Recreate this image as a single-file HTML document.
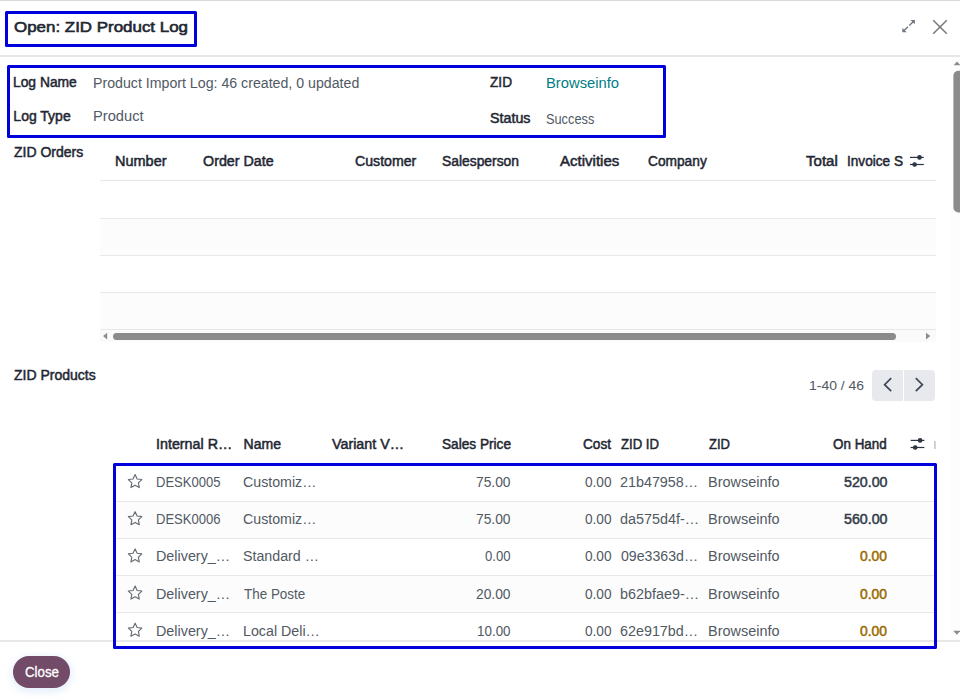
<!DOCTYPE html>
<html lang="en">
<head>
<meta charset="utf-8">
<title>Open: ZID Product Log</title>
<style>
html,body{margin:0;padding:0;background:#fff;}
body{width:960px;height:700px;position:relative;overflow:hidden;font-family:"Liberation Sans",Arial,sans-serif;}
.a{position:absolute;}
.t{position:absolute;white-space:nowrap;line-height:20px;font-weight:400;transform-origin:0 0;}
.t.b{font-weight:400;-webkit-text-stroke:0.5px currentColor;}
.t.c{-webkit-text-stroke:0.3px currentColor;}
.t.h{-webkit-text-stroke:0.6px currentColor;}
i.m{display:inline-block;width:0;height:0;}
.ln{position:absolute;height:1px;background:#e7e8ea;}
.hl{position:absolute;border:3px solid #0000dc;box-sizing:border-box;border-radius:1.5px;}
.stripe{position:absolute;left:100px;width:836px;background:#fcfcfc;}
svg{position:absolute;overflow:visible;}
</style>
</head>
<body>
<!-- dialog frame -->
<div class="a" style="left:0;top:0;width:960px;height:1px;background:#d9dadc"></div>
<div class="a" style="left:0;top:55px;width:960px;height:1.5px;background:#e6e7e9"></div>
<div class="a" style="left:0;top:640px;width:960px;height:1.6px;background:#e7e8ea"></div>

<div class="a" style="left:951px;top:57px;width:9px;height:583px;background:#fdfdfd"></div>
<!-- ZID Orders table -->
<div class="stripe" style="top:218px;height:37px"></div>
<div class="stripe" style="top:292px;height:37px"></div>
<div class="ln" style="left:100px;width:836px;top:180px;background:#e5e6e8"></div>
<div class="ln" style="left:100px;width:836px;top:218px"></div>
<div class="ln" style="left:100px;width:836px;top:255px"></div>
<div class="ln" style="left:100px;width:836px;top:292px"></div>
<div class="ln" style="left:100px;width:836px;top:329px"></div>
<!-- horizontal scrollbar -->
<div class="a" style="left:100px;top:330px;width:836px;height:12px;background:#fafafa"></div>
<div class="a" style="left:113px;top:332.5px;width:783px;height:7px;border-radius:3.5px;background:#8b8b8b"></div>
<svg style="left:0;top:0" width="960" height="700" viewBox="0 0 960 700">
  <path d="M107.2 332.8 L107.2 339.4 L103 336.1 Z" fill="#8b8b8b"/>
  <path d="M926 332.8 L926 339.4 L930.3 336.1 Z" fill="#8b8b8b"/>
  <!-- vertical scrollbar -->
  <path d="M953.6 65.3 L960.5 65.3 L957 61.6 Z" fill="#8b8b8b"/>
  <path d="M953.3 630.7 L960.5 630.7 L956.9 634.7 Z" fill="#8b8b8b"/>
  <rect x="953.4" y="70.7" width="12" height="141.8" rx="5" fill="#8b8b8b"/>
  <!-- expand icon -->
  <g fill="#6f7680" stroke="none">
    <path d="M914.9 19.9 L914.9 24.3 L910.5 19.9 Z"/>
    <path d="M902.3 32.3 L902.3 27.9 L906.7 32.3 Z"/>
  </g>
  <g stroke="#6f7680" stroke-width="1.4" fill="none">
    <path d="M913.4 21.4 L909.3 25.5"/>
    <path d="M903.8 30.8 L907.9 26.7"/>
  </g>
  <!-- close X -->
  <g stroke="#7a7a7c" stroke-width="1.55" fill="none" stroke-linecap="butt">
    <path d="M933.2 20.2 L946.8 33.8"/>
    <path d="M946.8 20.2 L933.2 33.8"/>
  </g>
  <!-- slider icons -->
  <g id="sl1" stroke="#2c3541" stroke-width="1.2" fill="#2c3541">
    <path d="M910 157.4 H923.8" fill="none"/>
    <path d="M910 164.5 H923.8" fill="none"/>
    <circle cx="919.5" cy="157.4" r="1.75"/>
    <circle cx="914.6" cy="164.5" r="1.75"/>
  </g>
  <g stroke="#2c3541" stroke-width="1.2" fill="#2c3541" transform="translate(0.6,283.0)">
    <path d="M910 157.4 H923.8" fill="none"/>
    <path d="M910 164.5 H923.8" fill="none"/>
    <circle cx="919.5" cy="157.4" r="1.75"/>
    <circle cx="914.6" cy="164.5" r="1.75"/>
  </g>
  <rect x="934.2" y="441" width="1.4" height="8" fill="#b9bcc1"/>
</svg>

<!-- pager -->
<div class="a" style="left:871.5px;top:369.5px;width:31.5px;height:31.7px;background:#e7e9ed;border-radius:4px 0 0 4px"></div>
<div class="a" style="left:904px;top:369.5px;width:31.4px;height:31.7px;background:#e7e9ed;border-radius:0 4px 4px 0"></div>
<svg style="left:0;top:0" width="960" height="700" viewBox="0 0 960 700">
  <g stroke="#3f4856" stroke-width="1.7" fill="none" stroke-linejoin="miter">
    <path d="M891.2 378.2 L884.6 384.7 L891.2 391.2"/>
    <path d="M915.8 378.2 L922.4 384.7 L915.8 391.2"/>
  </g>
</svg>

<!-- ZID Products table -->
<div class="stripe" style="top:501px;height:37px;left:116px;width:818px"></div>
<div class="stripe" style="top:575px;height:37px;left:116px;width:818px"></div>
<div class="ln" style="left:116px;width:818px;top:501px"></div>
<div class="ln" style="left:116px;width:818px;top:538px"></div>
<div class="ln" style="left:116px;width:818px;top:575px"></div>
<div class="ln" style="left:116px;width:818px;top:612px"></div>
<svg style="left:0;top:0" width="960" height="700" viewBox="0 0 960 700">
  <g fill="none" stroke="#676c73" stroke-width="1.15" stroke-linejoin="round">
    <path transform="translate(135.1,481.5)" d="M0 -6.9 L2.05 -2.55 L6.75 -1.95 L3.3 1.35 L4.15 6.1 L0 3.8 L-4.15 6.1 L-3.3 1.35 L-6.75 -1.95 L-2.05 -2.55 Z"/>
    <path transform="translate(135.1,518.6)" d="M0 -6.9 L2.05 -2.55 L6.75 -1.95 L3.3 1.35 L4.15 6.1 L0 3.8 L-4.15 6.1 L-3.3 1.35 L-6.75 -1.95 L-2.05 -2.55 Z"/>
    <path transform="translate(135.1,555.8)" d="M0 -6.9 L2.05 -2.55 L6.75 -1.95 L3.3 1.35 L4.15 6.1 L0 3.8 L-4.15 6.1 L-3.3 1.35 L-6.75 -1.95 L-2.05 -2.55 Z"/>
    <path transform="translate(135.1,593.0)" d="M0 -6.9 L2.05 -2.55 L6.75 -1.95 L3.3 1.35 L4.15 6.1 L0 3.8 L-4.15 6.1 L-3.3 1.35 L-6.75 -1.95 L-2.05 -2.55 Z"/>
    <path transform="translate(135.1,630.1)" d="M0 -6.9 L2.05 -2.55 L6.75 -1.95 L3.3 1.35 L4.15 6.1 L0 3.8 L-4.15 6.1 L-3.3 1.35 L-6.75 -1.95 L-2.05 -2.55 Z"/>
  </g>
</svg>

<!-- Close button -->
<div class="a" style="left:13.3px;top:656.3px;width:56.7px;height:32px;border-radius:16px;background:#714b67;box-shadow:0 2px 8px 1px rgba(175,205,240,.4)"></div>

<span class="t h" id="t0" style="left:14.00px;top:17.40px;font-size:15px;color:#1f2733;transform:scaleX(1.1281)">Open: ZID Product Log</span>
<span class="t b" id="t1" style="left:13.35px;top:72.00px;font-size:14px;color:#1f2733;transform:scaleX(0.9872)">Log Name</span>
<span class="t" id="t2" style="left:92.85px;top:73.00px;font-size:14px;color:#515963;transform:scaleX(1.0122)">Product Import Log: 46 created, 0 updated</span>
<span class="t b" id="t3" style="left:13.35px;top:106.25px;font-size:14px;color:#1f2733">Log Type</span>
<span class="t" id="t4" style="left:92.85px;top:106.25px;font-size:14px;color:#515963;transform:scaleX(1.0475)">Product</span>
<span class="t b" id="t5" style="left:490.00px;top:72.00px;font-size:14px;color:#1f2733;transform:scaleX(0.9751)">ZID</span>
<span class="t" id="t6" style="left:546.10px;top:73.00px;font-size:14px;color:#017e84;transform:scaleX(1.0548)">Browseinfo</span>
<span class="t b" id="t7" style="left:490.00px;top:108.00px;font-size:14px;color:#1f2733;transform:scaleX(1.0204)">Status</span>
<span class="t" id="t8" style="left:546.10px;top:108.60px;font-size:14px;color:#515963;transform:scaleX(0.9124)">Success</span>
<span class="t b" id="t9" style="left:14.00px;top:142.00px;font-size:14px;color:#1f2733">ZID Orders</span>
<span class="t b" id="t10" style="left:114.60px;top:150.75px;font-size:14px;color:#1f2733;transform:scaleX(1.0346)">Number</span>
<span class="t b" id="t11" style="left:203.00px;top:150.75px;font-size:14px;color:#1f2733;transform:scaleX(1.0217)">Order Date</span>
<span class="t b" id="t12" style="left:355.00px;top:150.75px;font-size:14px;color:#1f2733;transform:scaleX(1.0094)">Customer</span>
<span class="t b" id="t13" style="left:441.52px;top:150.75px;font-size:14px;color:#1f2733;transform:scaleX(0.9895)">Salesperson</span>
<span class="t b" id="t14" style="left:560.00px;top:150.75px;font-size:14px;color:#1f2733;transform:scaleX(1.0728)">Activities</span>
<span class="t b" id="t15" style="left:647.50px;top:150.75px;font-size:14px;color:#1f2733;transform:scaleX(0.9806)">Company</span>
<span class="t b" id="t16" style="left:805.75px;top:150.75px;font-size:14px;color:#1f2733;transform:scaleX(1.0738)">Total</span>
<span class="t b" id="t17" style="left:847.10px;top:150.75px;font-size:14px;color:#1f2733;transform:scaleX(0.9726)">Invoice S</span>
<span class="t b" id="t18" style="left:14.00px;top:365.00px;font-size:14px;color:#1f2733">ZID Products</span>
<span class="t" id="t19" style="left:809.10px;top:376.00px;font-size:13.5px;color:#515963;transform:scaleX(1.0334)">1-40 / 46</span>
<span class="t b" id="t20" style="left:155.85px;top:434.00px;font-size:14px;color:#1f2733;transform:scaleX(1.0216)">Internal R…</span>
<span class="t b" id="t21" style="left:243.60px;top:434.00px;font-size:14px;color:#1f2733">Name</span>
<span class="t b" id="t22" style="left:332.48px;top:434.00px;font-size:14px;color:#1f2733;transform:scaleX(1.0208)">Variant V…</span>
<span class="t b" id="t23" style="left:441.96px;top:434.00px;font-size:14px;color:#1f2733;transform:scaleX(0.9745)">Sales Price</span>
<span class="t b" id="t24" style="left:582.52px;top:434.00px;font-size:14px;color:#1f2733;transform:scaleX(0.9723)">Cost</span>
<span class="t b" id="t25" style="left:621.00px;top:434.00px;font-size:14px;color:#1f2733;transform:scaleX(0.9394)">ZID ID</span>
<span class="t b" id="t26" style="left:709.00px;top:434.00px;font-size:14px;color:#1f2733;transform:scaleX(0.9307)">ZID</span>
<span class="t b" id="t27" style="left:832.50px;top:434.00px;font-size:14px;color:#1f2733;transform:scaleX(0.9591)">On Hand</span>
<span class="t" id="t28" style="left:156.10px;top:472.00px;font-size:14px;color:#515963;transform:scaleX(0.9315)">DESK0005</span>
<span class="t" id="t29" style="left:243.35px;top:472.00px;font-size:14px;color:#515963;transform:scaleX(1.0138)">Customiz…</span>
<span class="t" id="t30" style="left:475.62px;top:472.00px;font-size:14px;color:#515963;transform:scaleX(0.9861)">75.00</span>
<span class="t" id="t31" style="left:585.00px;top:472.00px;font-size:14px;color:#515963;transform:scaleX(0.9738)">0.00</span>
<span class="t" id="t32" style="left:620.10px;top:472.00px;font-size:14px;color:#515963;transform:scaleX(1.0240)">21b47958…</span>
<span class="t" id="t33" style="left:708.10px;top:472.00px;font-size:14px;color:#515963;transform:scaleX(1.0327)">Browseinfo</span>
<span class="t b" id="t34" style="left:843.58px;top:472.00px;font-size:14px;color:#323b48;transform:scaleX(1.0162)">520.00</span>
<span class="t" id="t35" style="left:156.10px;top:509.00px;font-size:14px;color:#515963;transform:scaleX(0.9315)">DESK0006</span>
<span class="t" id="t36" style="left:243.35px;top:509.00px;font-size:14px;color:#515963;transform:scaleX(1.0138)">Customiz…</span>
<span class="t" id="t37" style="left:475.62px;top:509.00px;font-size:14px;color:#515963;transform:scaleX(0.9861)">75.00</span>
<span class="t" id="t38" style="left:585.00px;top:509.00px;font-size:14px;color:#515963;transform:scaleX(0.9738)">0.00</span>
<span class="t" id="t39" style="left:620.10px;top:509.00px;font-size:14px;color:#515963;transform:scaleX(1.0267)">da575d4f-…</span>
<span class="t" id="t40" style="left:708.10px;top:509.00px;font-size:14px;color:#515963;transform:scaleX(1.0327)">Browseinfo</span>
<span class="t b" id="t41" style="left:843.58px;top:509.00px;font-size:14px;color:#323b48;transform:scaleX(1.0162)">560.00</span>
<span class="t" id="t42" style="left:156.10px;top:546.00px;font-size:14px;color:#515963;transform:scaleX(1.0245)">Delivery_…</span>
<span class="t" id="t43" style="left:243.35px;top:546.00px;font-size:14px;color:#515963;transform:scaleX(1.0155)">Standard …</span>
<span class="t" id="t44" style="left:484.50px;top:546.00px;font-size:14px;color:#515963;transform:scaleX(0.9365)">0.00</span>
<span class="t" id="t45" style="left:585.00px;top:546.00px;font-size:14px;color:#515963;transform:scaleX(0.9738)">0.00</span>
<span class="t" id="t46" style="left:621.00px;top:546.00px;font-size:14px;color:#515963;transform:scaleX(1.0099)">09e3363d…</span>
<span class="t" id="t47" style="left:708.10px;top:546.00px;font-size:14px;color:#515963;transform:scaleX(1.0327)">Browseinfo</span>
<span class="t b" id="t48" style="left:860.00px;top:546.00px;font-size:14px;color:#9a6b01;transform:scaleX(0.9908)">0.00</span>
<span class="t" id="t49" style="left:156.10px;top:584.00px;font-size:14px;color:#515963;transform:scaleX(1.0245)">Delivery_…</span>
<span class="t" id="t50" style="left:244.25px;top:584.00px;font-size:14px;color:#515963;transform:scaleX(0.9597)">The Poste</span>
<span class="t" id="t51" style="left:475.62px;top:584.00px;font-size:14px;color:#515963;transform:scaleX(0.9861)">20.00</span>
<span class="t" id="t52" style="left:585.00px;top:584.00px;font-size:14px;color:#515963;transform:scaleX(0.9738)">0.00</span>
<span class="t" id="t53" style="left:620.10px;top:584.00px;font-size:14px;color:#515963;transform:scaleX(1.0267)">b62bfae9-…</span>
<span class="t" id="t54" style="left:708.10px;top:584.00px;font-size:14px;color:#515963;transform:scaleX(1.0327)">Browseinfo</span>
<span class="t b" id="t55" style="left:860.00px;top:584.00px;font-size:14px;color:#9a6b01;transform:scaleX(0.9908)">0.00</span>
<span class="t" id="t56" style="left:156.10px;top:621.00px;font-size:14px;color:#515963;transform:scaleX(1.0245)">Delivery_…</span>
<span class="t" id="t57" style="left:243.35px;top:621.00px;font-size:14px;color:#515963;transform:scaleX(1.0184)">Local Deli…</span>
<span class="t" id="t58" style="left:476.60px;top:621.00px;font-size:14px;color:#515963;transform:scaleX(0.9577)">10.00</span>
<span class="t" id="t59" style="left:585.00px;top:621.00px;font-size:14px;color:#515963;transform:scaleX(0.9738)">0.00</span>
<span class="t" id="t60" style="left:620.10px;top:621.00px;font-size:14px;color:#515963;transform:scaleX(1.0240)">62e917bd…</span>
<span class="t" id="t61" style="left:708.10px;top:621.00px;font-size:14px;color:#515963;transform:scaleX(1.0327)">Browseinfo</span>
<span class="t b" id="t62" style="left:860.00px;top:621.00px;font-size:14px;color:#9a6b01;transform:scaleX(0.9908)">0.00</span>
<span class="t c" id="t63" style="left:24.50px;top:661.70px;font-size:14px;color:#ffffff;transform:scaleX(0.9501)">Close</span>

<!-- highlight boxes -->
<div class="hl" style="left:5px;top:11px;width:192px;height:36px"></div>
<div class="hl" style="left:7px;top:65px;width:658.5px;height:73px"></div>
<div class="hl" style="left:113px;top:463px;width:824px;height:185.6px"></div>
</body>
</html>
